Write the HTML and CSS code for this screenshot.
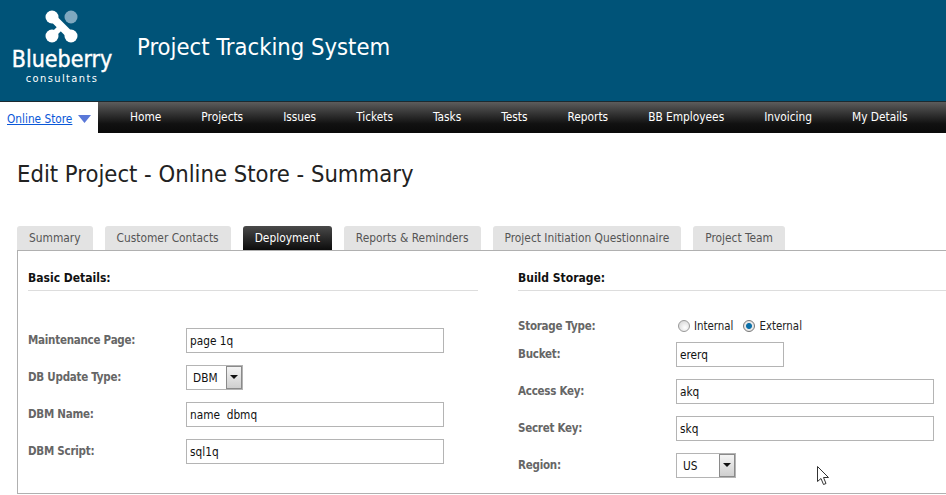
FILE: index.html
```html
<!DOCTYPE html>
<html>
<head>
  <title>Project Tracking System</title>
  <link rel="stylesheet" href="styles.css">
</head>
<body>
  <div class="header">
    <div class="logo">
      <svg class="logo-mark" width="33" height="33" viewBox="0 0 33 33">
        <circle cx="26" cy="7" r="6.5" fill="#7fa8bf"/>
        <path d="M7 7 L26 26" stroke="#fff" stroke-width="8" fill="none"/>
        <path d="M7 26 L15 18" stroke="#fff" stroke-width="6" fill="none"/>
        <circle cx="7" cy="7" r="6.5" fill="#fff"/>
        <circle cx="7" cy="26" r="6.5" fill="#fff"/>
        <circle cx="26" cy="26" r="6.5" fill="#fff"/>
      </svg>
      <div class="logo-name">Blueberry</div>
      <div class="logo-sub">consultants</div>
    </div>
    <div class="app-title">Project Tracking System</div>
  </div>

  <div class="nav">
    <div class="store">
      <a href="#">Online Store</a>
      <svg width="13" height="8" viewBox="0 0 13 8"><path d="M0 0 H13 L6.5 8 Z" fill="#5a78d8"/></svg>
    </div>
    <div class="nav-links">
      <a href="#">Home</a>
      <a href="#">Projects</a>
      <a href="#">Issues</a>
      <a href="#">Tickets</a>
      <a href="#">Tasks</a>
      <a href="#">Tests</a>
      <a href="#">Reports</a>
      <a href="#">BB Employees</a>
      <a href="#">Invoicing</a>
      <a href="#">My Details</a>
    </div>
  </div>

  <h1>Edit Project - Online Store - Summary</h1>

  <div class="tabs">
    <div class="tab">Summary</div>
    <div class="tab">Customer Contacts</div>
    <div class="tab active">Deployment</div>
    <div class="tab">Reports &amp; Reminders</div>
    <div class="tab">Project Initiation Questionnaire</div>
    <div class="tab">Project Team</div>
  </div>

  <div class="panel">
    <div class="col col-left">
      <h2>Basic Details:</h2>
      <div class="rows rows-left">
        <label>Maintenance Page:</label>
        <input class="wide" type="text" value="page 1q">
        <label>DB Update Type:</label>
        <div class="select sel-dbm"><span>DBM</span><b class="arrow"></b></div>
        <label>DBM Name:</label>
        <input class="wide" type="text" value="name  dbmq">
        <label>DBM Script:</label>
        <input class="wide" type="text" value="sql1q">
      </div>
    </div>
    <div class="col col-right">
      <h2>Build Storage:</h2>
      <div class="radio-row">
        <label>Storage Type:</label>
        <div class="radios">
          <i class="radio"></i><span class="radio-text">Internal</span>
          <i class="radio on"></i><span>External</span>
        </div>
      </div>
      <div class="rows rows-right">
        <label>Bucket:</label>
        <input class="short" type="text" value="ererq">
        <label>Access Key:</label>
        <input class="wide" type="text" value="akq">
        <label>Secret Key:</label>
        <input class="wide" type="text" value="skq">
        <label>Region:</label>
        <div class="select sel-region"><span>US</span><b class="arrow"></b></div>
      </div>
    </div>
  </div>

  <svg class="cursor" width="13" height="20" viewBox="0 0 13 20">
    <path d="M0.5 0.5 V15.5 L4 12.5 L6.5 18.5 L9 17.5 L6.5 11.5 H11.5 Z" fill="#fff" stroke="#333" stroke-width="1"/>
  </svg>
</body>
</html>
```

FILE: styles.css
```css
html, body {
  margin: 0;
  height: 495px;
  overflow: hidden;
  background: #fff;
}

body {
  position: relative;
  font-family: "DejaVu Sans Condensed", "DejaVu Sans", sans-serif;
  font-stretch: condensed;
  font-size: 11.75px;
  color: #222;
}

.header {
  height: 101px;
  background: #005378;
  display: flex;
  color: #fff;
}

.logo {
  width: 124px;
  text-align: center;
  flex: none;
  padding-top: 10px;
  box-sizing: border-box;
}

.logo-mark {
  display: block;
  margin-left: 45px;
}

.logo-name {
  font-size: 23px;
  line-height: 27px;
  margin-top: 3px;
  -webkit-text-stroke: 0.4px #fff;
}

.logo-sub {
  font-size: 11px;
  line-height: 11px;
  letter-spacing: 1.4px;
}

.app-title {
  margin-left: 13px;
  margin-top: 31px;
  font-size: 23.6px;
  line-height: 32px;
}

.nav {
  height: 31px;
  display: flex;
  border-top: 1px solid #1c2a30;
  background: linear-gradient(#5c5c5c, #111 70%, #0a0a0a);
}

.store {
  width: 98px;
  flex: none;
  background: #fff;
  display: flex;
  align-items: center;
  gap: 6px;
  padding-left: 7px;
  padding-top: 3px;
  box-sizing: border-box;
}

.store a {
  color: #0a58d8;
}

.nav-links {
  display: flex;
  gap: 40px;
  padding-left: 32px;
  padding-bottom: 2px;
  align-items: center;
  font-size: 11.8px;
}

.nav-links a {
  color: #fff;
  text-decoration: none;
}

h1 {
  margin: 0;
  padding: 25px 0 0 17px;
  font-size: 23.6px;
  line-height: 32px;
  font-weight: normal;
  color: #222;
}

.tabs {
  display: flex;
  gap: 12px;
  margin: 36px 0 0 17px;
  font-size: 11.85px;
}

.tab {
  height: 24px;
  line-height: 24px;
  padding: 0 12px;
  background: #e3e3e3;
  color: #555;
  border-radius: 3px 3px 0 0;
}

.tab.active {
  background: linear-gradient(#4a4a4a, #0c0c0c);
  color: #fff;
}

.panel {
  margin-left: 17px;
  height: 244px;
  border: 1px solid #b0b0b0;
  border-right: 0;
  display: flex;
  box-sizing: border-box;
}

.col {
  padding-top: 18px;
  box-sizing: border-box;
}

.col-left {
  width: 450px;
  margin-left: 10px;
  flex: none;
}

.col-right {
  margin-left: 40px;
  flex: 1;
}

h2 {
  margin: 0;
  height: 21px;
  font-size: 12px;
  line-height: 18px;
  font-weight: bold;
  color: #111;
  border-bottom: 1px solid #ddd;
}

label {
  font-size: 11.5px;
  letter-spacing: -0.25px;
  font-weight: bold;
  color: #666;
}

.rows {
  display: grid;
  grid-template-columns: 158px 1fr;
  grid-auto-rows: 25px;
  row-gap: 12px;
  align-items: center;
  justify-items: start;
}

.rows label {
  padding-bottom: 1px;
}

.rows-left {
  margin-top: 37px;
}

.rows-right {
  margin-top: 8px;
}

.radio-row {
  display: grid;
  grid-template-columns: 158px 1fr;
  align-items: center;
  height: 17px;
  margin-top: 26px;
}

.radios {
  display: flex;
  align-items: center;
  padding-left: 2px;
  font-size: 11.4px;
}

.radio {
  width: 12px;
  height: 12px;
  box-sizing: border-box;
  border-radius: 50%;
  border: 1px solid #999;
  background: radial-gradient(circle at 60% 65%, #fff, #d0d0d0);
  margin-right: 4px;
}

.radio.on {
  background: radial-gradient(circle, #0a6fa8 0 2.5px, #e8e8e8 3.5px);
  border-color: #777;
}

.radio-text {
  margin-right: 10px;
}

input {
  height: 25px;
  box-sizing: border-box;
  border: 1px solid #b4b4b4;
  padding: 0 3px;
  font-family: inherit;
  font-stretch: inherit;
  font-size: 11.75px;
  color: #111;
  white-space: pre;
}

.wide {
  width: 258px;
}

.short {
  width: 108px;
}

.select {
  height: 25px;
  box-sizing: border-box;
  border: 1px solid #b4b4b4;
  display: flex;
  align-items: center;
  justify-content: space-between;
  color: #111;
  padding-left: 6px;
}

.sel-dbm {
  width: 57px;
}

.sel-region {
  width: 60px;
}

.arrow {
  width: 16px;
  height: 23px;
  box-sizing: border-box;
  border: 1px solid #8a8a8a;
  background: linear-gradient(#f4f4f4, #cfcfcf);
  position: relative;
}

.arrow::after {
  content: "";
  position: absolute;
  left: 3px;
  top: 8px;
  border: 4px solid transparent;
  border-top-color: #111;
  border-bottom: 0;
}

.cursor {
  position: absolute;
  left: 817px;
  top: 466px;
}
```
